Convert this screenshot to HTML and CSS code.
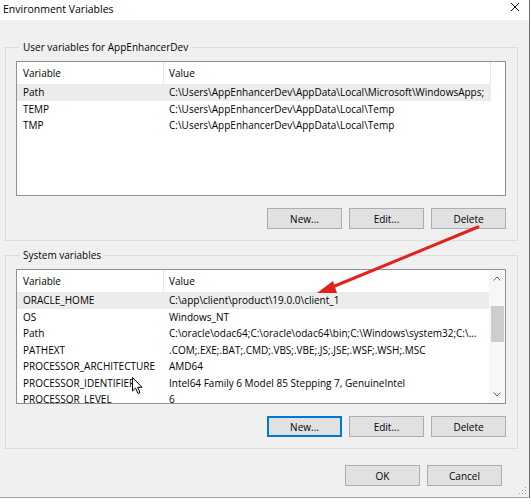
FILE: index.html
```html
<!DOCTYPE html>
<html>
<head>
<meta charset="utf-8">
<link rel="stylesheet" href="styles.css">
</head>
<body>
<div class="window">
  <div class="titlebar">
    <span class="title">Environment Variables</span>
    <svg class="close" width="10" height="10" viewBox="0 0 10 10"><path d="M1 1 L9 9 M9 1 L1 9" stroke="#111" stroke-width="1" fill="none"/></svg>
  </div>
  <div class="content">
    <div class="group">
      <div class="legend">User variables for AppEnhancerDev</div>
      <div class="list user-list">
        <div class="table">
          <div class="hdr"><div class="c1">Variable</div><div class="c2">Value</div></div>
          <div class="row sel"><div class="c1">Path</div><div class="c2">C:\Users\AppEnhancerDev\AppData\Local\Microsoft\WindowsApps;</div></div>
          <div class="row"><div class="c1">TEMP</div><div class="c2">C:\Users\AppEnhancerDev\AppData\Local\Temp</div></div>
          <div class="row"><div class="c1">TMP</div><div class="c2">C:\Users\AppEnhancerDev\AppData\Local\Temp</div></div>
        </div>
      </div>
      <div class="btns">
        <button class="btn">New...</button>
        <button class="btn">Edit...</button>
        <button class="btn">Delete</button>
      </div>
    </div>
    <div class="group sys">
      <div class="legend">System variables</div>
      <div class="list">
        <div class="table">
          <div class="hdr"><div class="c1">Variable</div><div class="c2">Value</div></div>
          <div class="row sel"><div class="c1">ORACLE_HOME</div><div class="c2">C:\app\client\product\19.0.0\client_1</div></div>
          <div class="row"><div class="c1">OS</div><div class="c2">Windows_NT</div></div>
          <div class="row"><div class="c1">Path</div><div class="c2">C:\oracle\odac64;C:\oracle\odac64\bin;C:\Windows\system32;C:\...</div></div>
          <div class="row"><div class="c1">PATHEXT</div><div class="c2">.COM;.EXE;.BAT;.CMD;.VBS;.VBE;.JS;.JSE;.WSF;.WSH;.MSC</div></div>
          <div class="row"><div class="c1">PROCESSOR_ARCHITECTURE</div><div class="c2">AMD64</div></div>
          <div class="row"><div class="c1">PROCESSOR_IDENTIFIER</div><div class="c2">Intel64 Family 6 Model 85 Stepping 7, GenuineIntel</div></div>
          <div class="row"><div class="c1">PROCESSOR_LEVEL</div><div class="c2">6</div></div>
        </div>
        <div class="scrollbar">
          <div class="sb-btn"><svg width="8" height="5" viewBox="0 0 8 5"><path d="M0.5 4.5 L4 1 L7.5 4.5" stroke="#606060" fill="none" stroke-width="1"/></svg></div>
          <div class="sb-track"><div class="sb-thumb"></div></div>
          <div class="sb-btn"><svg width="8" height="5" viewBox="0 0 8 5"><path d="M0.5 0.5 L4 4 L7.5 0.5" stroke="#606060" fill="none" stroke-width="1"/></svg></div>
        </div>
      </div>
      <div class="btns">
        <button class="btn focus">New...</button>
        <button class="btn">Edit...</button>
        <button class="btn">Delete</button>
      </div>
    </div>
    <div class="dlg-btns">
      <button class="btn">OK</button>
      <button class="btn">Cancel</button>
    </div>
  </div>
  <svg class="annot" width="531" height="504" viewBox="0 0 531 504">
    <line x1="478" y1="227" x2="330" y2="288" stroke="#e0241c" stroke-width="3" stroke-linecap="round"/>
    <polygon points="317,293 333,281 337,293" fill="#e0241c"/>
  </svg>
  <svg class="cursor" width="12" height="18" viewBox="0 0 12 18">
    <path d="M0.5 0.5 L0.5 14 L3.6 11 L6 16.5 L8 15.6 L5.7 10.3 L10 10.3 Z" fill="#fff" stroke="#000" stroke-width="1" stroke-linejoin="miter"/>
  </svg>
  <svg class="grip" width="8" height="8" viewBox="0 0 8 8">
    <rect x="6" y="0" width="1" height="1" fill="#9a9a9a"/>
    <rect x="3" y="3" width="1" height="1" fill="#9a9a9a"/>
    <rect x="6" y="3" width="1" height="1" fill="#9a9a9a"/>
    <rect x="0" y="6" width="1" height="1" fill="#9a9a9a"/>
    <rect x="3" y="6" width="1" height="1" fill="#9a9a9a"/>
    <rect x="6" y="6" width="1" height="1" fill="#9a9a9a"/>
  </svg>
</div>
</body>
</html>
```

FILE: styles.css
```css
html, body {
  margin: 0;
  padding: 0;
  background: #ffffff;
}
body {
  font-family: "Open Sans", "Noto Sans", "Liberation Sans", sans-serif;
  font-size: 10px;
  color: #000;
}
.window {
  position: relative;
  width: 529px;
  height: 497px;
  background: #f0f0f0;
  border-right: 1px solid #6e6e6e;
  border-bottom: 1px solid #a0a0a0;
  display: flex;
  flex-direction: column;
}
.titlebar {
  height: 20px;
  background: #ffffff;
  display: flex;
  justify-content: space-between;
  align-items: flex-start;
  padding: 0 9px 0 3px;
}
.title {
  font-size: 10.5px;
  line-height: 18px;
}
.close {
  margin-top: 2px;
}
.content {
  padding: 0 11px 0 5px;
  display: flex;
  flex-direction: column;
}
.group {
  margin-top: 27px;
  border: 1px solid #dcdcdc;
  padding: 0 11px 11px 10px;
  display: flex;
  flex-direction: column;
}
.group.sys {
  margin-top: 14px;
}
.legend {
  margin: -8px 0 0 3px;
  padding: 0 3px 0 4px;
  height: 15px;
  line-height: 15px;
  background: #f0f0f0;
  align-self: flex-start;
}
.list {
  margin-top: 6px;
  height: 133px;
  border: 1px solid #8c8f96;
  background: #ffffff;
  display: flex;
  overflow: hidden;
}
.table {
  flex: 1;
  overflow: hidden;
}
.hdr, .row {
  display: flex;
  width: 474px;
  white-space: nowrap;
}
.hdr {
  height: 22px;
  line-height: 22px;
}
.hdr .c1 {
  border-right: 1px solid #e5e5e5;
}
.hdr .c2 {
  border-right: 1px solid #e5e5e5;
}
.row {
  height: 16.5px;
  line-height: 16.5px;
}
.row.sel {
  background: #ececec;
}
.c1 {
  width: 146px;
  padding-left: 6px;
  box-sizing: border-box;
  flex: none;
}
.hdr .c1 {
  width: 147px;
}
.c2 {
  flex: 1;
  padding-left: 5px;
  overflow: hidden;
}
.row .c1 {
  width: 147px;
}
.scrollbar {
  width: 16px;
  flex: none;
  background: #f7f7f7;
  display: flex;
  flex-direction: column;
}
.sb-btn {
  height: 17px;
  display: flex;
  align-items: center;
  justify-content: center;
}
.sb-track {
  flex: 1;
  padding: 19px 1px 0 2px;
}
.sb-thumb {
  height: 36px;
  background: #cdcdcd;
}
.btns {
  margin-top: 12px;
  display: flex;
  justify-content: flex-end;
  gap: 7px;
}
.btn {
  width: 75px;
  height: 21px;
  margin: 0;
  padding: 0;
  box-sizing: border-box;
  background: #e1e1e1;
  border: 1px solid #adadad;
  font-family: inherit;
  font-size: 10px;
  color: #000;
}
.btn.focus {
  border: 1px solid #0078d7;
  box-shadow: inset 0 0 0 1px #0078d7;
}
.dlg-btns {
  margin-top: 16px;
  margin-right: 16px;
  display: flex;
  justify-content: flex-end;
  gap: 7px;
}
.annot {
  position: absolute;
  left: 0;
  top: 0;
  pointer-events: none;
}
.cursor {
  position: absolute;
  left: 132px;
  top: 377px;
}
.grip {
  position: absolute;
  right: 2px;
  bottom: 2px;
}
```
